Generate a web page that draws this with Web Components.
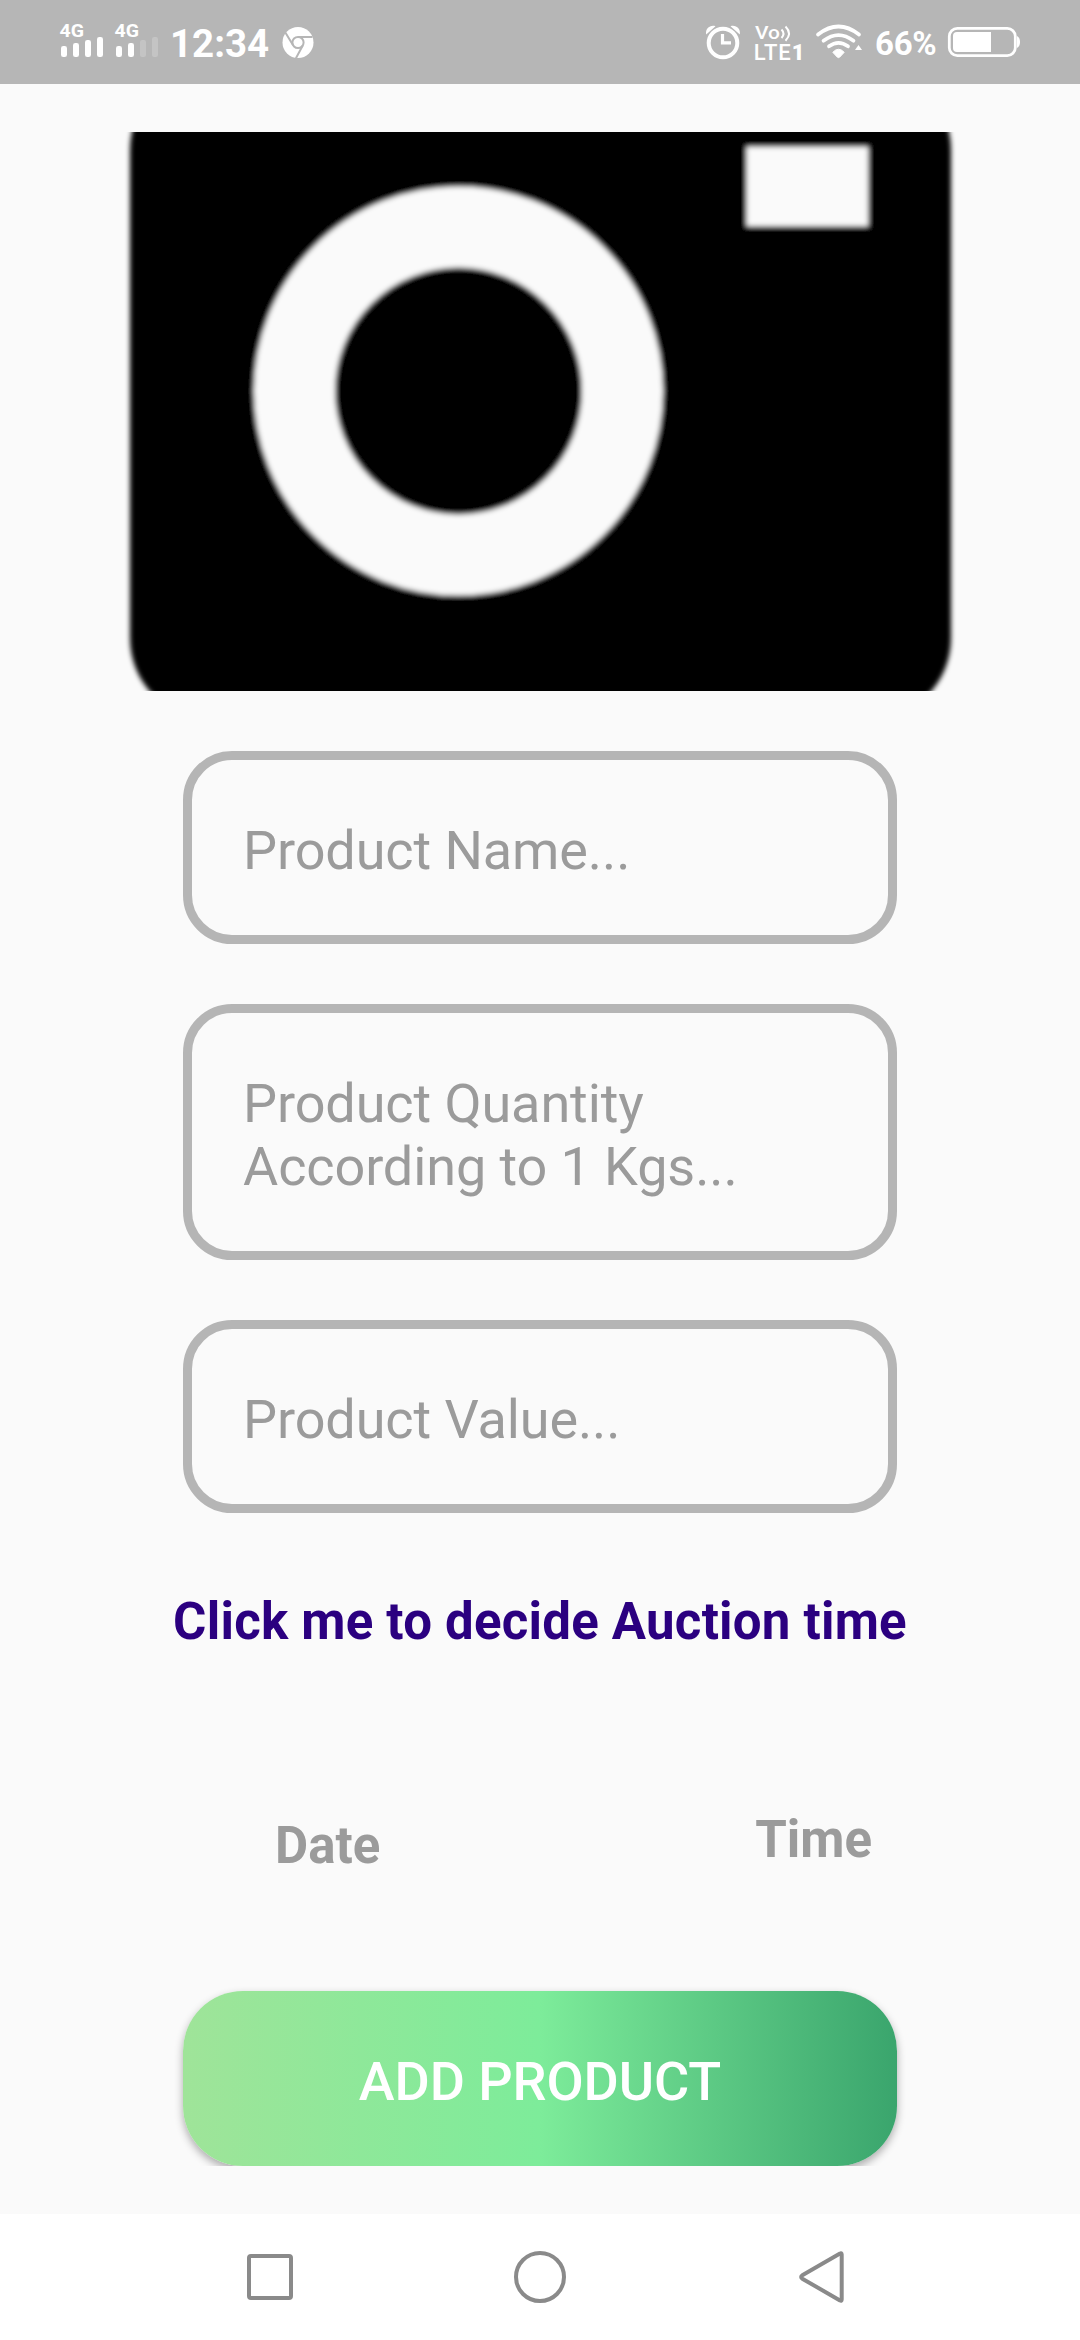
<!DOCTYPE html>
<html lang="en">
<head>
<meta charset="utf-8">
<title>Add product</title>
<style>
html,body{margin:0;padding:0}
body{background:#fafafa;font-family:Roboto,"Noto Sans",sans-serif}
</style>
</head>
<body>
<product-screen></product-screen>
<script>
function define(name, html) {
  const tpl = document.createElement('template');
  tpl.innerHTML = html;
  customElements.define(name, class extends HTMLElement {
    constructor() {
      super();
      this.attachShadow({mode: 'open'}).appendChild(tpl.content.cloneNode(true));
    }
  });
}

define('status-bar', `
<style>
:host{display:flex;height:84px;background:#b6b6b6;color:#fff;justify-content:space-between;box-sizing:border-box;padding:0 59px 0 58px;font-weight:700}
.g{display:flex;height:84px}
svg{display:block;flex:none;height:84px}
.clock{font-size:38.5px;line-height:88px;width:97px;margin-left:10px;white-space:nowrap}
.pct{font-size:33px;line-height:88px;width:62px;margin-left:11px;white-space:nowrap;letter-spacing:-.3px}
text{font-family:Roboto,sans-serif;fill:#fff}
</style>
<div class="g">
<svg width="102" viewBox="58 0 102 84" fill="#fff">
<text x="59.5" y="36.5" font-size="19" textLength="24.5" lengthAdjust="spacingAndGlyphs">4G</text>
<text x="114.5" y="36.5" font-size="19" textLength="24.5" lengthAdjust="spacingAndGlyphs">4G</text>
<rect x="61" y="46" width="6" height="11" rx="2.3"/><rect x="73" y="43" width="6" height="14" rx="2.3"/><rect x="85" y="40" width="6" height="17" rx="2.3"/><rect x="97" y="37" width="6" height="20" rx="2.3"/>
<rect x="116" y="46" width="6" height="11" rx="2.3"/><rect x="128" y="43" width="6" height="14" rx="2.3"/>
<g opacity=".2"><rect x="140" y="40" width="6" height="17" rx="2.3"/><rect x="152" y="37" width="6" height="20" rx="2.3"/></g>
</svg>
<span class="clock">12:34</span>
<svg width="34" viewBox="280.5 0 34 84" style="margin-left:13.5px">
<circle cx="297.5" cy="42.5" r="15.5" fill="#fff"/>
<g fill="none" stroke="#b6b6b6" stroke-width="2"><circle cx="297.5" cy="42.5" r="5.6"/><path d="M297.5 37H312M292.6 45.3L285 32.8M302.4 45.3L295.4 58.2"/></g>
</svg>
</div>
<div class="g">
<svg width="160" viewBox="704 0 160 84" fill="none" stroke="#fff">
<circle cx="723" cy="43" r="14.3" stroke-width="4"/>
<path d="M722.5 34V42.8H731" stroke-width="3.2"/>
<path d="M706.2 34.5C705 29 710 24.5 715.5 26.2ZM739.8 34.5C741 29 736 24.5 730.5 26.2Z" fill="#fff" stroke="none"/>
<text x="755" y="38.5" font-size="19" font-weight="500" stroke="none" textLength="25" lengthAdjust="spacingAndGlyphs">Vo</text>
<path d="M781.5 29.5Q785.5 33.7 781.5 38M785.5 26.5Q792.5 33.5 785.5 40.8" stroke-width="2"/>
<text x="753.7" y="59.7" font-size="22" font-weight="500" stroke="none" textLength="37">LTE</text>
<text x="791.7" y="59.7" font-size="22" font-weight="900" stroke="none">1</text>
<g stroke-width="3.7" stroke-linecap="round"><path d="M818 34.5Q838.5 18.5 859 34.5M823.5 40.7Q838.5 29.5 853.5 40.7M829 46.3Q838.5 39.3 848 46.3"/></g>
<path d="M832.8 52.3Q838.5 46.2 844.2 52.3L839.8 57Q838.5 58.3 837.2 57Z" fill="#fff" stroke="#fff" stroke-width="1"/>
<path d="M855 50L858.5 45L862 50Z" fill="#fff" stroke="none"/>
</svg>
<span class="pct">66%</span>
<svg width="74" viewBox="947 0 74 84" style="margin-left:10px" fill="#fff">
<rect x="949.3" y="28.3" width="66" height="27.4" rx="8" fill="none" stroke="#fff" stroke-width="2.8"/>
<path d="M957 32H991V52H957Q953 52 953 48V36Q953 32 957 32Z"/>
<path d="M1017 36Q1020 37.5 1020 42T1017 48Z"/>
</svg>
</div>`);

define('camera-picture', `
<style>:host{display:block;width:840px;height:559px;overflow:hidden}svg{display:block}</style>
<svg width="840" height="559" viewBox="120 132 840 559">
<defs><filter id="soft" x="100" y="30" width="880" height="720" filterUnits="userSpaceOnUse"><feGaussianBlur stdDeviation="2.5"/></filter></defs>
<g filter="url(#soft)">
<rect x="130" y="68" width="821" height="652" rx="82"/>
<circle cx="458.5" cy="391" r="164" fill="none" stroke="#fafafa" stroke-width="81"/>
<rect x="746.5" y="147" width="121.5" height="79" fill="#fafafa"/>
</g></svg>`);

define('hint-field', `
<style>:host{display:block;box-sizing:border-box;width:714px;border:9px solid #b5b5b5;border-radius:49px;padding:59px 51px 53px;font-size:54px;line-height:63px;letter-spacing:-.1px;color:#9b9b9b}</style>
<slot></slot>`);

define('text-label', `
<style>:host{display:block;font-size:51px;line-height:60px;font-weight:700;white-space:nowrap}</style>
<slot></slot>`);

define('gradient-button', `
<style>
:host{display:flex;justify-content:center;width:760px;height:185px;padding-top:10px;box-sizing:border-box;overflow:hidden}
button{all:unset;box-sizing:border-box;width:714px;height:175px;border-radius:60px;padding-top:6px;text-align:center;font:500 54px/1 Roboto,sans-serif;line-height:169px;letter-spacing:-.1px;color:#fff;background:linear-gradient(90deg,#9fe499,#7dec9a 50%,#3aa56d);box-shadow:0 4px 9px rgba(0,0,0,.32)}
</style>
<button><slot></slot></button>`);

define('nav-bar', `
<style>:host{display:flex;height:126px;background:#fff;align-items:center;justify-content:space-between;box-sizing:border-box;padding:0 231px 0 242px}svg{display:block}.home{margin-right:11px}</style>
<svg width="56" height="56" viewBox="-28 -28 56 56" fill="none" stroke="#8a8a8a" stroke-width="4"><rect x="-21" y="-21" width="42" height="42" rx="2"/></svg>
<svg class="home" width="56" height="56" viewBox="-28 -28 56 56" fill="none" stroke="#8a8a8a" stroke-width="4"><circle r="24"/></svg>
<svg width="56" height="56" viewBox="793 2249 56 56" fill="none" stroke="#8a8a8a" stroke-width="4" stroke-linejoin="round"><path d="M841.7 2254.5Q841.7 2252.5 840 2253.6L802.3 2275.3Q800 2277 802.3 2278.7L840 2300.4Q841.7 2301.5 841.7 2299.5Z"/></svg>`);

define('product-screen', `
<style>
:host{display:flex;flex-direction:column;width:1080px;height:2340px;background:#fafafa;overflow:hidden}
main{flex:1;display:flex;flex-direction:column;align-items:center;padding-top:48px}
form{display:flex;flex-direction:column;gap:60px;margin:60px 0 79px}
.when{display:flex;align-self:stretch;justify-content:space-between;align-items:flex-start;margin:158px 208px 105px 275px;color:#9b9b9b}
.date{margin-top:6px}
.link{color:#2b0080;letter-spacing:.22px}
</style>
<status-bar></status-bar>
<main>
<camera-picture></camera-picture>
<form>
<hint-field>Product Name...</hint-field>
<hint-field>Product Quantity According to 1 Kgs...</hint-field>
<hint-field>Product Value...</hint-field>
</form>
<text-label class="link">Click me to decide Auction time</text-label>
<div class="when"><text-label class="date">Date</text-label><text-label>Time</text-label></div>
<gradient-button>ADD PRODUCT</gradient-button>
</main>
<nav-bar></nav-bar>`);
</script>
</body>
</html>
